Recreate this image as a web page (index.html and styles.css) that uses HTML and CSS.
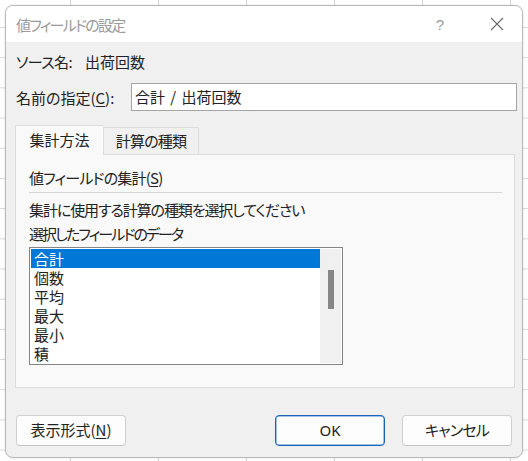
FILE: index.html
```html
<!DOCTYPE html>
<html lang="ja">
<head>
<meta charset="utf-8">
<title>値フィールドの設定</title>
<link rel="stylesheet" href="styles.css">
</head>
<body>
<div class="sheet">
  <div class="dialog">
    <div class="titlebar">
      <span class="title">値フィールドの設定</span>
      <span class="help">?</span>
      <span class="close">
        <svg width="16" height="16" viewBox="0 0 16 16"><path d="M2 2 L14 14 M14 2 L2 14" stroke="#6a6a6a" stroke-width="1.1" fill="none"/></svg>
      </span>
    </div>
    <div class="body">
      <div class="row source">
        <span class="lbl-source">ソース名:</span>
        <span>出荷回数</span>
      </div>
      <div class="row name">
        <span class="lbl-name">名前の指定(<u>C</u>):</span>
        <div class="input">合計 / 出荷回数</div>
      </div>
      <div class="tabs">
        <div class="tab active">集計方法</div>
        <div class="tab">計算の種類</div>
      </div>
      <div class="panel">
        <div class="group-title">値フィールドの集計(<u>S</u>)</div>
        <div class="sep"></div>
        <div class="line line-a">集計に使用する計算の種類を選択してください</div>
        <div class="line line-b">選択したフィールドのデータ</div>
        <div class="listbox">
          <div class="items">
            <div class="item selected">合計</div>
            <div class="item">個数</div>
            <div class="item">平均</div>
            <div class="item">最大</div>
            <div class="item">最小</div>
            <div class="item">積</div>
          </div>
          <div class="scroll"><div class="thumb"></div></div>
        </div>
      </div>
      <div class="buttons">
        <div class="btn fmt">表示形式(<u>N</u>)</div>
        <div class="spacer"></div>
        <div class="btn ok">OK</div>
        <div class="btn cancel">キャンセル</div>
      </div>
      <div class="grip">
        <svg width="10" height="10" viewBox="0 0 10 10"><path d="M9 3 L3 9 M9 6 L6 9" stroke="#9a9a9a" stroke-width="1" fill="none"/></svg>
      </div>
    </div>
  </div>
</div>
</body>
</html>
```
FILE: styles.css
```css
html, body {
  margin: 0;
  padding: 0;
}
body {
  width: 528px;
  height: 461px;
  overflow: hidden;
  font-family: "Noto Sans CJK JP", "Noto Sans", sans-serif;
  font-feature-settings: "palt" 1;
  font-size: 15px;
  color: #222222;
}
.sheet {
  width: 528px;
  height: 461px;
  background-color: #ffffff;
  background-image:
    linear-gradient(to right, #d4d4d4 1px, transparent 1px),
    linear-gradient(to bottom, #d8d8d8 1px, transparent 1px);
  background-size: 88px 100%, 100% 30.2px;
  background-position: 70px 0, 0 27px;
  padding: 5px 0 0 5px;
  box-sizing: border-box;
}
.dialog {
  width: 518px;
  height: 453px;
  border: 1px solid #b9b9b9;
  border-radius: 8px;
  overflow: hidden;
  box-sizing: border-box;
  background: #f0f0f0;
  display: flex;
  flex-direction: column;
  box-shadow: 0 0 2px rgba(0,0,0,0.15);
}
.titlebar {
  height: 36px;
  background: #ffffff;
  display: flex;
  align-items: center;
  padding-left: 10px;
  flex-shrink: 0;
}
.title {
  color: #9a9a9a;
  flex: 1;
  padding-top: 1px;
  letter-spacing: -1.7px;
}
.help {
  color: #9a9a9a;
  font-family: "Liberation Sans", sans-serif;
  font-size: 15px;
  width: 16px;
  margin-right: 41px;
  text-align: center;
}
.close {
  width: 16px;
  height: 16px;
  margin-right: 17px;
  display: flex;
}
.body {
  flex: 1;
  padding: 10px 0 0 10px;
  position: relative;
}
.row {
  display: flex;
  align-items: center;
}
.source {
  height: 20px;
  line-height: 20px;
}
.lbl-source {
  width: 69px;
  letter-spacing: -0.6px;
}
.name {
  margin-top: 11px;
  height: 28px;
}
.lbl-name {
  width: 115px;
}
.input {
  width: 386px;
  height: 28px;
  box-sizing: border-box;
  border: 1px solid #a5a5a5;
  background: #ffffff;
  line-height: 25px;
  padding-left: 3px;
  word-spacing: 2px;
}
u {
  text-decoration-thickness: 1px;
  text-underline-offset: 2px;
}
.tabs {
  margin-top: 14px;
  display: flex;
  align-items: flex-end;
  height: 29px;
  margin-left: -1px;
}
.tab {
  box-sizing: border-box;
  height: 27px;
  line-height: 25px;
  border: 1px solid #dcdcdc;
  border-bottom: none;
  background: #f0f0f0;
  width: 96px;
  text-align: center;
  white-space: nowrap;
  letter-spacing: -0.8px;
}
.tab.active {
  height: 30px;
  width: 88px;
  line-height: 28px;
  background: #f9f9f9;
  border-right: none;
  position: relative;
  z-index: 1;
  margin-bottom: -1px;
  letter-spacing: 0;
}
.panel {
  margin-left: -1px;
  width: 500px;
  height: 234px;
  box-sizing: border-box;
  border: 1px solid #dcdcdc;
  background: #f9f9f9;
  padding: 13px 12px 0 13px;
}
.group-title {
  line-height: 20px;
  letter-spacing: -0.8px;
}
.sep {
  height: 1px;
  background: #d6d6d6;
  margin-top: 4px;
}
.line {
  line-height: 24px;
}
.line-a {
  letter-spacing: -1.1px;
}
.line-b {
  letter-spacing: -1.9px;
}
.sep + .line {
  margin-top: 5px;
}
.listbox {
  margin-top: 1px;
  width: 314px;
  height: 118px;
  box-sizing: border-box;
  border: 1px solid #848484;
  background: #ffffff;
  display: flex;
  padding: 1px;
}
.items {
  flex: 1;
  overflow: hidden;
}
.item {
  height: 19px;
  line-height: 19px;
  padding-left: 3px;
}
.item.selected {
  background: #0078d7;
  color: #ffffff;
}
.scroll {
  width: 21px;
  background: #f0f0f0;
  position: relative;
}
.thumb {
  margin: 21px 0 0 8px;
  width: 6px;
  height: 39px;
  background: #868686;
}
.buttons {
  display: flex;
  margin-top: 27px;
  padding-right: 10px;
  gap: 17px;
}
.spacer {
  flex: 1;
  margin-left: -17px;
}
.btn {
  box-sizing: border-box;
  width: 110px;
  height: 31px;
  line-height: 28px;
  text-align: center;
  background: #fdfdfd;
  border: 1px solid #d0d0d0;
  border-bottom-color: #c4c4c4;
  border-radius: 4px;
}
.btn.cancel {
  letter-spacing: -0.8px;
}
.btn.ok {
  border: 1px solid #1a64b8;
  box-shadow: inset 0 0 0 0.5px #4a8ad0;
  font-family: "Noto Sans", sans-serif;
}
.grip {
  position: absolute;
  right: 1px;
  bottom: 1px;
  width: 10px;
  height: 10px;
}
```
